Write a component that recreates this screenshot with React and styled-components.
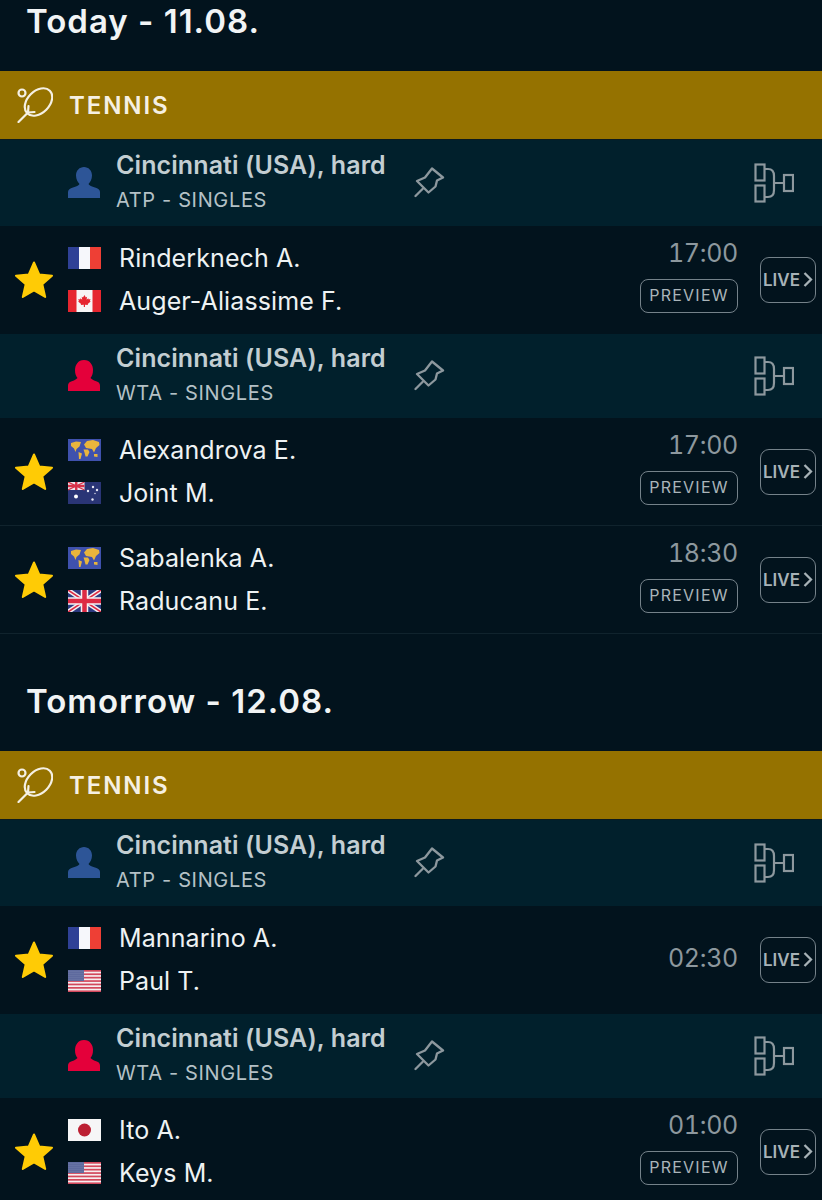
import React from "react";
import styled, { createGlobalStyle } from "styled-components";

const Global = createGlobalStyle`
  html, body { margin: 0; padding: 0; background: #02131d; }
  body { font-family: "Inter", "Liberation Sans", sans-serif; }
`;

const Page = styled.div`
  width: 822px;
  height: 1200px;
  overflow: hidden;
  background: #02131d;
`;
const Section = styled.section`
  margin-bottom: 46px;
`;
const DayTitle = styled.h2`
  margin: 0;
  height: 71px;
  padding-left: 26px;
  font-size: 33px;
  line-height: 42px;
  font-weight: 600;
  color: #f1f4f5;
  letter-spacing: 1px;
`;
const SportBar = styled.div`
  height: 68px;
  display: flex;
  align-items: center;
  gap: 16px;
  padding-left: 17px;
  background: #957200;
  border-bottom: 1px solid #0b1a1e;
`;
const SportName = styled.span`
  font-size: 24px;
  font-weight: 600;
  letter-spacing: 1.9px;
  color: #f5f0e3;
`;
const LeagueRow = styled.div`
  height: ${p => p.$h}px;
  display: flex;
  align-items: center;
  background: #01202c;
  padding-left: 68px;
  padding-right: 28px;
`;
const LeagueText = styled.div`
  margin-left: 16px;
  margin-bottom: 4px;
  width: 298px;
  display: flex;
  flex-direction: column;
  gap: 8px;
`;
const LeagueName = styled.div`
  font-size: 25px;
  line-height: 30px;
  font-weight: 600;
  color: #c3ced2;
  letter-spacing: 0.1px;
`;
const LeagueSub = styled.div`
  font-size: 20px;
  line-height: 24px;
  color: #b4c1c6;
  letter-spacing: 0.65px;
`;
const PinWrap = styled.div`
  display: flex;
  width: 32px;
  height: 32px;
`;
const BracketWrap = styled.div`
  margin-left: auto;
  display: flex;
`;
const MatchRow = styled.div`
  height: ${p => p.$h}px;
  display: flex;
  align-items: center;
  padding: 0 6px 0 15px;
  border-bottom: 1px solid ${p => (p.$line ? "#10232d" : "transparent")};
  box-sizing: border-box;
`;
const StarCell = styled.div`
  width: 53px;
  display: flex;
`;
const Players = styled.div`
  display: flex;
  flex-direction: column;
  gap: 13px;
`;
const Player = styled.div`
  display: flex;
  align-items: center;
  gap: 18px;
  height: 30px;
`;
const PlayerName = styled.span`
  font-size: 25px;
  line-height: 30px;
  font-weight: 400;
  color: #eef2f3;
  letter-spacing: 0.1px;
`;
const Side = styled.div`
  margin-left: auto;
  display: flex;
  flex-direction: column;
  align-items: flex-end;
  gap: 11px;
  padding-bottom: ${p => (p.$preview ? 9 : 4)}px;
`;
const Time = styled.div`
  font-size: 25px;
  line-height: 30px;
  color: #8d989e;
  font-feature-settings: "tnum";
  letter-spacing: -0.3px;
`;
const Preview = styled.div`
  width: 98px;
  height: 34px;
  box-sizing: border-box;
  display: flex;
  align-items: center;
  justify-content: center;
  padding-bottom: 1px;
  border: 1px solid #75828a;
  border-radius: 8px;
  font-size: 16px;
  letter-spacing: 1.25px;
  color: #aab5ba;
`;
const Live = styled.div`
  margin-left: 22px;
  width: 56px;
  height: 46px;
  box-sizing: border-box;
  display: flex;
  align-items: center;
  justify-content: center;
  gap: 3px;
  border: 1px solid #75828a;
  border-radius: 9px;
  font-size: 17px;
  font-weight: 600;
  color: #a7b2b7;
`;

const Racket = () => (
  <svg width="36" height="36" viewBox="0 0 36 36" fill="none" stroke="#f5f0e3" strokeWidth="2.2" strokeLinecap="round">
    <circle cx="5" cy="6" r="3.5" />
    <ellipse cx="21.5" cy="15" rx="16" ry="11" transform="rotate(-45 21.500 15)" />
    <path d="M1.500 35 L11 25.500 M11 25.500 L11.500 19 M11 25.500 L17.500 25" />
  </svg>
);
const Person = ({ color, female }) => (
  <svg width="32" height="32" viewBox="0 0 32 32" fill={color}>
    {female ? (
      <path d="M16 0C22 0 25 5 25 10 25 14 24 16 22.500 18 24 20 28 21 30 22 31.500 23 32 24 32 26V31H0V26C0 24 .5 23 2 22 4 21 8 20 9.500 18 8 16 7 14 7 10 7 5 10 0 16 0Z" />
    ) : (
      <path d="M16 0C20.500 0 24 3.500 24 8.500 24 12.500 22 15.500 20.500 17 21 18.500 24 19.500 27 20.500 30 21.500 32 22.500 32 25V31H0V25C0 22.500 2 21.500 5 20.500 8 19.500 11 18.500 11.500 17 10 15.500 8 12.500 8 8.500 8 3.500 11.500 0 16 0Z" />
    )}
  </svg>
);
const PinIcon = () => (
  <svg width="32" height="32" viewBox="0 0 32 32" fill="none" stroke="#8d989e" strokeWidth="2.300" strokeLinejoin="round" strokeLinecap="round">
    <path d="M1.500 29 L8.500 22 M18 1.500 L29 10.500 L23 13.500 L21.500 19.500 L14.500 25.500 L3 14 L11 10.500 Z" />
  </svg>
);
const Bracket = () => (
  <svg width="40" height="40" viewBox="0 0 40 40" fill="none" stroke="#8d989e" strokeWidth="2.200">
    <rect x="1.500" y="1.500" width="9" height="16" />
    <rect x="1.500" y="22.500" width="9" height="16" />
    <rect x="30" y="12" width="9" height="16" />
    <path d="M10.500 6 H14 C18 6 20 9 20 13 V27 C20 31 18 34 14 34 H10.500 M20 20 H30" />
  </svg>
);
const Star = () => (
  <svg width="38" height="38" viewBox="0 0 38 38">
    <path fill="#ffcb05" stroke="#ffcb05" strokeWidth="2" strokeLinejoin="round" d="M19 1.500 L24.200 13.500 L37 14.700 L27.300 23.200 L30.200 36 L19 29.300 L7.800 36 L10.700 23.200 L1 14.700 L13.800 13.500 Z" />
  </svg>
);

const Flag = ({ code }) => (
  <svg width="33" height="22" viewBox="0 0 33 22" style={{ display: "block", flexShrink: 0 }}>
    {code === "fr" && (
      <>
        <rect width="11" height="22" fill="#2f4196" />
        <rect x="11" width="11" height="22" fill="#f6f7fb" />
        <rect x="22" width="11" height="22" fill="#ee3f35" />
      </>
    )}
    {code === "ca" && (
      <>
        <rect width="33" height="22" fill="#f7f5f5" />
        <rect width="8.500" height="22" fill="#e6262f" />
        <rect x="24.500" width="8.500" height="22" fill="#e6262f" />
        <path fill="#e6262f" d="M16.500 5l1.300 2.400 1.300-.6-.5 3 1.700-1.500.4 1.100 1.800-.3-.6 1.900.8.400-3 2.500.3 1.100-3-.3V17h-1.200v-2.300l-3 .3.300-1.100-3-2.500.8-.4-.6-1.900 1.800.3.400-1.100 1.700 1.500-.5-3 1.300.6z" />
      </>
    )}
    {code === "wd" && (
      <>
        <rect width="33" height="22" fill="#3f51ad" />
        <path fill="#e9b53c" d="M3 4l5-1.500 5 .5-1.500 4.500-3 2.500-1 3-1.500-3.500-3-2.500zM10.500 13l3.500 1.500-1.500 5.500-1.500 0zM16 5.500l3-3.500 6-1 6 2 .5 3-3.500 3-2 4.500-2-3.500-3-.5-3-.5zM15.500 10.500l4.500 0 1.500 2.500-2 4.500-2 0-1-4zM26 15l3.500 0 0 3-3.500-.5z" />
      </>
    )}
    {code === "au" && (
      <>
        <rect width="33" height="22" fill="#2a3576" />
        <rect width="16.500" height="8" fill="#ece8f0" />
        <path stroke="#d8324a" strokeWidth="1.300" d="M0 0 L16.500 8 M16.500 0 L0 8" />
        <path stroke="#d8324a" strokeWidth="2.400" d="M8.250 0 V8 M0 4 H16.500" />
        <circle cx="8" cy="14.500" r="2" fill="#fff" />
        <g fill="#e8e8f4">
          <circle cx="24.500" cy="17.500" r="1.200" />
          <circle cx="25" cy="5" r="1.200" />
          <circle cx="20" cy="9" r="1.200" />
          <circle cx="29" cy="8" r="1.200" />
          <circle cx="27" cy="11.500" r=".7" />
        </g>
      </>
    )}
    {code === "gb" && (
      <>
        <rect width="33" height="22" fill="#2d3a80" />
        <path stroke="#f4f0f3" strokeWidth="4.500" d="M0 0 L33 22 M33 0 L0 22" />
        <path stroke="#dd2a44" strokeWidth="1.600" d="M0 0 L33 22 M33 0 L0 22" />
        <path stroke="#f4f0f3" strokeWidth="7.500" d="M16.500 0 V22 M0 11 H33" />
        <path stroke="#dd2a44" strokeWidth="4.500" d="M16.500 0 V22 M0 11 H33" />
      </>
    )}
    {code === "us" && (
      <>
        <defs>
          <pattern id="stars" width="2" height="2" patternUnits="userSpaceOnUse">
            <rect width="2" height="2" fill="#475590" />
            <circle cx="1" cy="1" r=".55" fill="#c4c9dd" />
          </pattern>
        </defs>
        <rect width="33" height="22" fill="#f6eef0" />
        {[0, 3.4, 6.800, 10.200, 13.600, 17, 20.400].map(y => (
          <rect key={y} y={y} width="33" height="1.700" fill="#d2485c" />
        ))}
        <rect width="16" height="11" fill="url(#stars)" />
      </>
    )}
    {code === "jp" && (
      <>
        <rect width="33" height="22" fill="#f6f6f7" />
        <circle cx="16.500" cy="11" r="6.500" fill="#bc2033" />
      </>
    )}
  </svg>
);

const PlayerLine = ({ flag, name }) => (
  <Player>
    <Flag code={flag} />
    <PlayerName>{name}</PlayerName>
  </Player>
);

const League = ({ wta, h }) => (
  <LeagueRow $h={h}>
    <Person color={wta ? "#e4003a" : "#2d5597"} female={wta} />
    <LeagueText>
      <LeagueName>Cincinnati (USA), hard</LeagueName>
      <LeagueSub>{wta ? "WTA" : "ATP"} - SINGLES</LeagueSub>
    </LeagueText>
    <PinWrap><PinIcon /></PinWrap>
    <BracketWrap><Bracket /></BracketWrap>
  </LeagueRow>
);

const Match = ({ a, b, time, preview = true, line, h = 108 }) => (
  <MatchRow $line={line} $h={h}>
    <StarCell><Star /></StarCell>
    <Players>
      <PlayerLine flag={a[0]} name={a[1]} />
      <PlayerLine flag={b[0]} name={b[1]} />
    </Players>
    <Side $preview={preview}>
      <Time>{time}</Time>
      {preview && <Preview>PREVIEW</Preview>}
    </Side>
    <Live>
      LIVE
      <svg width="10" height="15" viewBox="0 0 10 15" fill="none" stroke="#a7b2b7" strokeWidth="2.300"><path d="M1.500 1 L8 7.500 L1.500 14" /></svg>
    </Live>
  </MatchRow>
);

const Sport = () => (
  <SportBar>
    <Racket />
    <SportName>TENNIS</SportName>
  </SportBar>
);

export default function App() {
  return (
    <Page>
      <Global />
      <Section>
        <DayTitle>Today - 11.08.</DayTitle>
        <Sport />
        <League h={86} />
        <Match a={["fr", "Rinderknech A."]} b={["ca", "Auger-Aliassime F."]} time="17:00" />
        <League wta h={84} />
        <Match a={["wd", "Alexandrova E."]} b={["au", "Joint M."]} time="17:00" line />
        <Match a={["wd", "Sabalenka A."]} b={["gb", "Raducanu E."]} time="18:30" line />
      </Section>
      <Section>
        <DayTitle>Tomorrow - 12.08.</DayTitle>
        <Sport />
        <League h={86} />
        <Match a={["fr", "Mannarino A."]} b={["us", "Paul T."]} time="02:30" preview={false} />
        <League wta h={84} />
        <Match a={["jp", "Ito A."]} b={["us", "Keys M."]} time="01:00" />
      </Section>
    </Page>
  );
}
